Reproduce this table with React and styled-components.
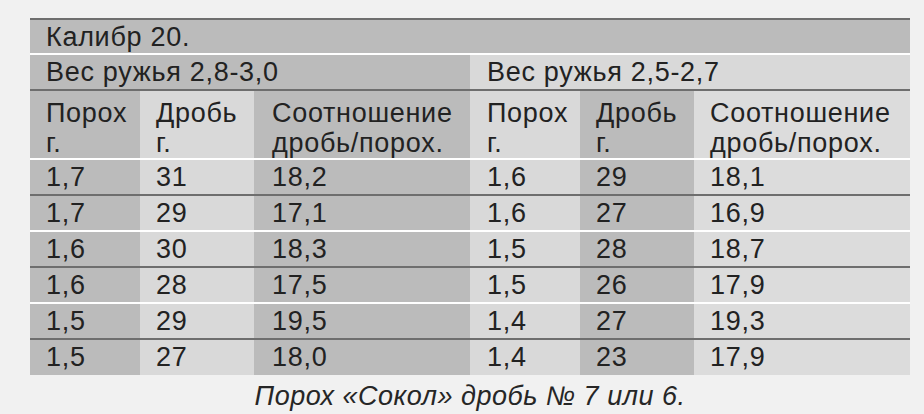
import React from 'react';
import styled, { createGlobalStyle } from 'styled-components';

const GlobalStyle = createGlobalStyle`
  html, body {
    margin: 0;
    padding: 0;
    background: #f1f1f1;
  }
  body {
    font-family: "Liberation Sans", Arial, sans-serif;
    color: #222222;
  }
`;

const Page = styled.div`
  width: 924px;
  height: 414px;
  padding: 18px 0 0 30px;
  box-sizing: border-box;
  overflow: hidden;
`;

const Wrap = styled.div`
  width: 880px;
`;

const Table = styled.table`
  width: 880px;
  border-collapse: collapse;
  table-layout: fixed;
  font-size: 27px;
  letter-spacing: 0.7px;
`;

const Row = styled.tr`
  & > td {
    border-top: 2px solid ${props => (props.$line === 'dark' ? '#6e6e6e' : '#ffffff')};
    height: ${props => props.$h || 34}px;
  }
`;

const Cell = styled.td`
  background: ${props => {
    switch (props.$shade) {
      case 'dark': return '#bbbbbb';
      case 'light': return '#d9d9d9';
      case 'pale': return '#dcdcdc';
      default: return '#bbbbbb';
    }
  }};
  padding: 2px 0 0 ${props => props.$pad || 16}px;
  line-height: 31px;
  vertical-align: top;
  box-sizing: border-box;
  white-space: nowrap;
`;

const HeadCell = styled(Cell)`
  padding-top: 7px;
  line-height: 30px;
`;

const Caption = styled.div`
  text-align: center;
  font-style: italic;
  font-size: 27px;
  letter-spacing: 0.5px;
  line-height: 31px;
  padding-top: 6px;
  color: #262626;
`;

const shades = ['dark', 'light', 'dark', 'light', 'dark', 'pale'];
const pads = [16, 16, 18, 17, 16, 16];

const rows = [
  ['1,7', '31', '18,2', '1,6', '29', '18,1'],
  ['1,7', '29', '17,1', '1,6', '27', '16,9'],
  ['1,6', '30', '18,3', '1,5', '28', '18,7'],
  ['1,6', '28', '17,5', '1,5', '26', '17,9'],
  ['1,5', '29', '19,5', '1,4', '27', '19,3'],
  ['1,5', '27', '18,0', '1,4', '23', '17,9'],
];

const heads = [
  ['Порох', 'г.'],
  ['Дробь', 'г.'],
  ['Соотношение', 'дробь/порох.'],
];

export default function App() {
  return (
    <Page>
      <GlobalStyle />
      <Wrap>
        <Table>
          <colgroup>
            <col style={{ width: 110 }} />
            <col style={{ width: 114 }} />
            <col style={{ width: 216 }} />
            <col style={{ width: 110 }} />
            <col style={{ width: 114 }} />
            <col style={{ width: 216 }} />
          </colgroup>
          <tbody>
            <Row $line="dark" $h={35}>
              <Cell colSpan={6} $shade="dark">Калибр 20.</Cell>
            </Row>
            <Row $line="light" $h={36}>
              <Cell colSpan={3} $shade="dark">Вес ружья 2,8-3,0</Cell>
              <Cell colSpan={3} $shade="light" $pad={17}>Вес ружья 2,5-2,7</Cell>
            </Row>
            <Row $line="dark" $h={69}>
              {[...heads, ...heads].map((h, i) => (
                <HeadCell key={i} $shade={shades[i]} $pad={pads[i]}>
                  {h[0]}
                  <br />
                  {h[1]}
                </HeadCell>
              ))}
            </Row>
            {rows.map((r, ri) => (
              <Row key={ri} $line={ri % 2 === 0 ? 'light' : 'dark'} $h={36}>
                {r.map((v, i) => (
                  <Cell key={i} $shade={shades[i]} $pad={pads[i]}>{v}</Cell>
                ))}
              </Row>
            ))}
          </tbody>
        </Table>
        <Caption>Порох «Сокол» дробь № 7 или 6.</Caption>
      </Wrap>
    </Page>
  );
}
